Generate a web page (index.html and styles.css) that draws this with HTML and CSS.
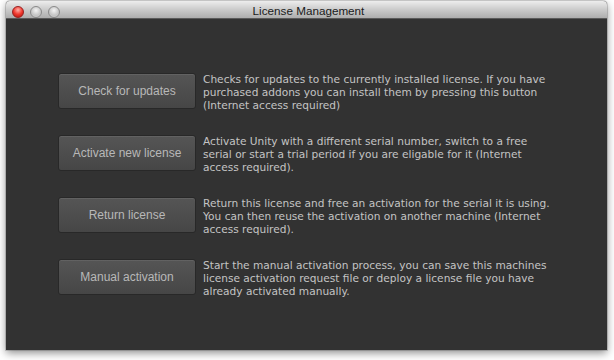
FILE: index.html
```html
<!DOCTYPE html>
<html lang="en">
<head>
    <meta charset="UTF-8">
    <title>License Management</title>
    <link rel="stylesheet" href="styles.css">
</head>
<body>
    <div class="window">
        <div class="titlebar">
            <div class="lights">
                <span class="light close"></span>
                <span class="light"></span>
                <span class="light"></span>
            </div>
            <div class="title">License Management</div>
        </div>

        <div class="content">
            <div class="row">
                <button class="action">Check for updates</button>
                <p class="desc">Checks for updates to the currently installed license. If you have purchased addons you can install them by pressing this button (Internet access required)</p>
            </div>
            <div class="row">
                <button class="action">Activate new license</button>
                <p class="desc">Activate Unity with a different serial number, switch to a free serial or start a trial period if you are eligable for it (Internet access required).</p>
            </div>
            <div class="row">
                <button class="action">Return license</button>
                <p class="desc">Return this license and free an activation for the serial it is using. You can then reuse the activation on another machine (Internet access required).</p>
            </div>
            <div class="row">
                <button class="action">Manual activation</button>
                <p class="desc">Start the manual activation process, you can save this machines license activation request file or deploy a license file you have already activated manually.</p>
            </div>
        </div>
    </div>
</body>
</html>
```

FILE: styles.css
```css
body {
    margin: 0;
    padding: 1px 7px 10px 6px;
    background-color: #ffffff;
    font-family: 'DejaVu Sans', Verdana, sans-serif;
}

.window {
    height: 349px;
    display: flex;
    flex-direction: column;
    background-color: #323232;
    border-radius: 4px 4px 0 0;
    box-shadow: 0 3px 8px rgba(0, 0, 0, 0.45), 0 0 0 1px rgba(0, 0, 0, 0.15);
    overflow: hidden;
}

.titlebar {
    position: relative;
    height: 17px;
    flex-shrink: 0;
    background: linear-gradient(#ededed, #cbcbcb 50%, #adadad);
    border-bottom: 1px solid #5a5a5a;
    display: flex;
    align-items: center;
    justify-content: center;
}

.lights {
    position: absolute;
    left: 6px;
    top: 4.5px;
    display: flex;
    gap: 6px;
}

.light {
    width: 10px;
    height: 10px;
    border-radius: 50%;
    border: 1px solid #8a8a8a;
    background: radial-gradient(circle at 50% 35%, #f4f4f4, #c4c4c4 60%, #d8d8d8);
}

.light.close {
    border-color: #9a2020;
    background: radial-gradient(circle at 50% 30%, #ffb0a8, #f03a30 50%, #b81810 90%);
}

.title {
    font-family: 'Liberation Sans', Arial, sans-serif;
    font-size: 11.7px;
    line-height: 14px;
    padding-top: 2px;
    color: #1a1a1a;
    margin-left: 4px;
}

.content {
    padding: 54px 20px 0 52px;
    display: flex;
    flex-direction: column;
    gap: 26px;
}

.row {
    display: flex;
    align-items: flex-start;
    gap: 7px;
    height: 36px;
}

.action {
    width: 138px;
    height: 36px;
    flex-shrink: 0;
    background: linear-gradient(#555555, #464646);
    color: #b8b8b8;
    border: 1px solid #282828;
    border-radius: 3px;
    box-shadow: inset 0 1px 0 rgba(255, 255, 255, 0.08);
    font-family: 'Liberation Sans', Arial, sans-serif;
    font-size: 12px;
    padding: 0;
}

.desc {
    margin: 0;
    width: 350px;
    font-size: 10.6px;
    line-height: 13px;
    color: #c4c4c4;
}
```
